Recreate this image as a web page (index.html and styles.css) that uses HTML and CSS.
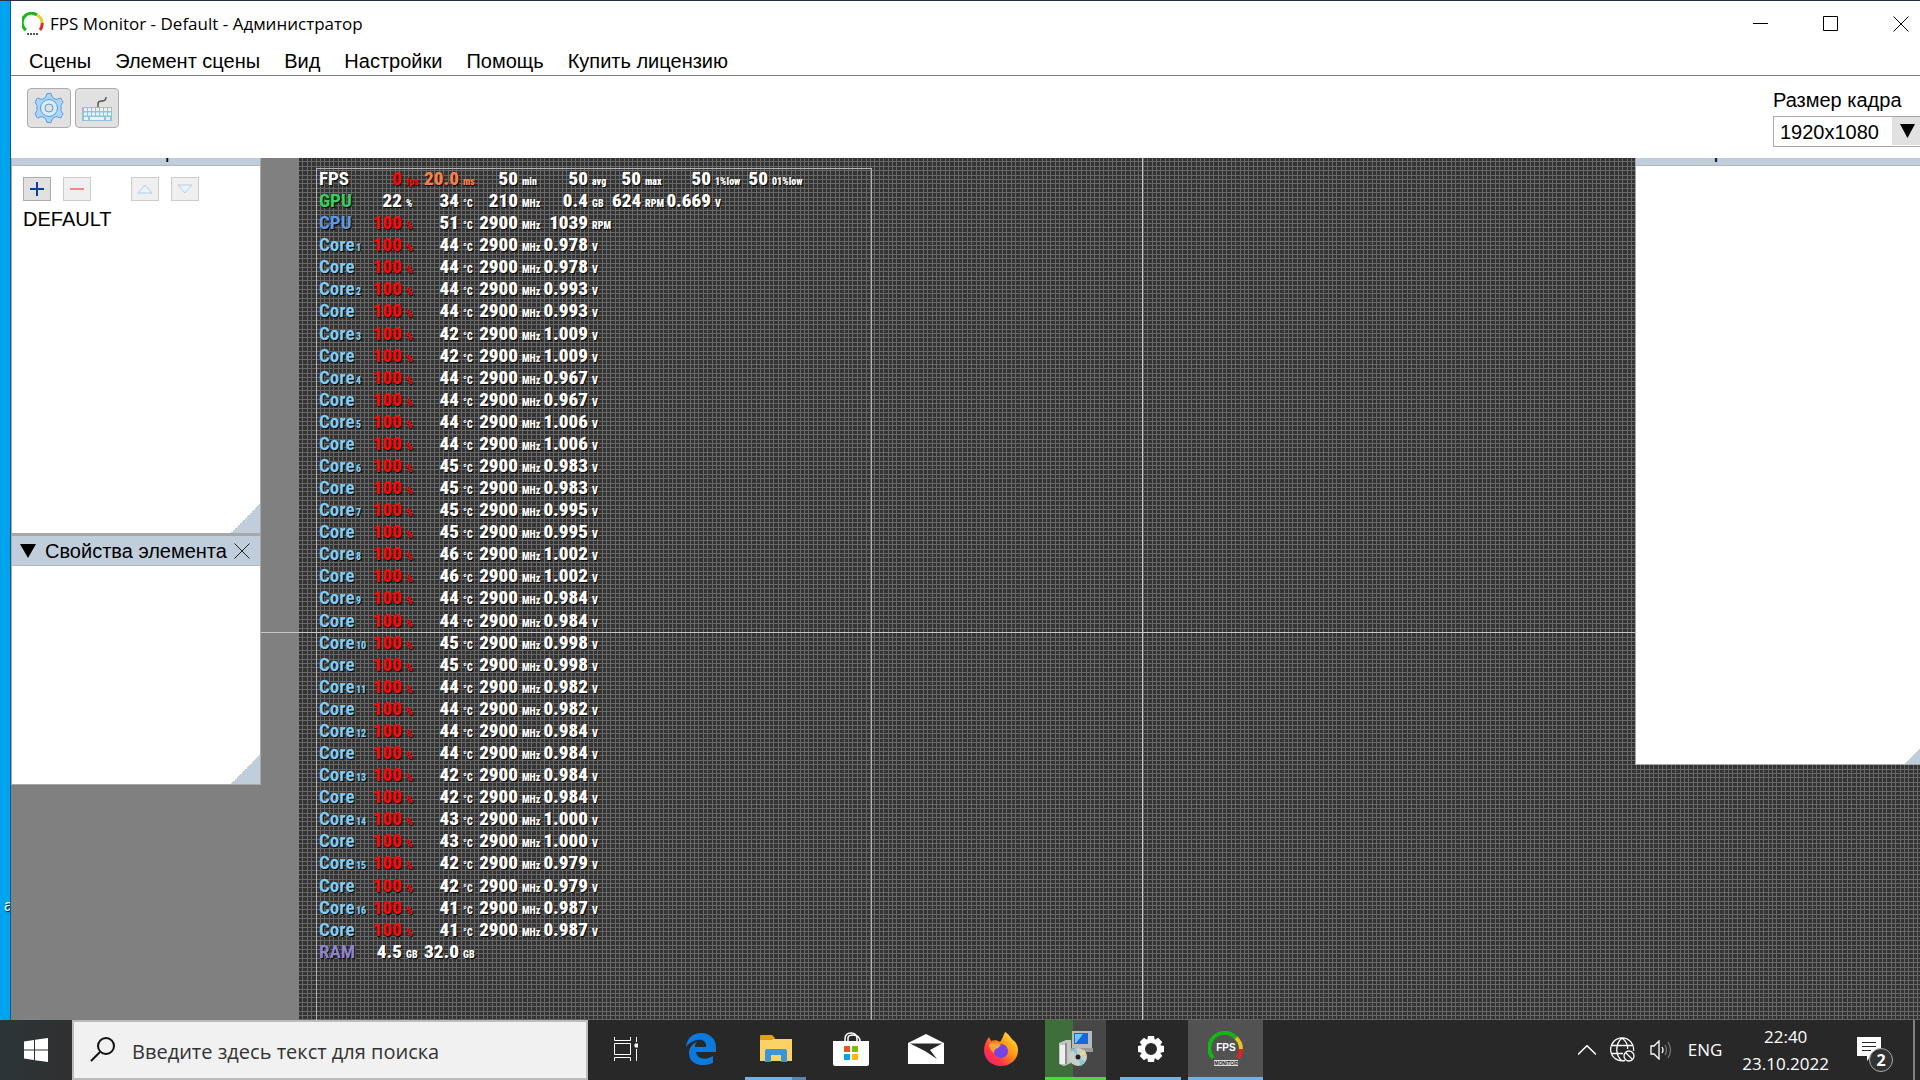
FILE: index.html
```html
<!DOCTYPE html>
<html lang="ru">
<head>
<meta charset="utf-8">
<title>FPS Monitor - Default - Администратор</title>
<link rel="stylesheet" href="styles.css">
</head>
<body>
<div class="desktop">
  <div class="wallpaper"><span class="wallpaper-label">a</span></div>
  <main class="window">
    <header class="titlebar">
      <svg class="app-icon" width="22" height="24" viewBox="0 0 22 24" fill="none" stroke-width="3">
        <path d="M4 18A9 9 0 0 1 15 3" stroke="#18b818"/>
        <path d="M15 3A9 9 0 0 1 20 11" stroke="#e8d020"/>
        <path d="M20 11A9 9 0 0 1 18 18" stroke="#e02828"/>
        <path d="M5 22H17" stroke="#555" stroke-width="2" stroke-dasharray="2 1"/>
      </svg>
      <h1 class="title">FPS Monitor - Default - Администратор</h1>
      <div class="window-buttons">
        <button class="plain" aria-label="Свернуть"><svg width="16" height="16"><path d="M0 7.500H15" stroke="#000"/></svg></button>
        <button class="plain" aria-label="Развернуть"><svg width="16" height="16"><path d="M.5 .5H14.500V14.500H.5Z" fill="none" stroke="#000"/></svg></button>
        <button class="plain" aria-label="Закрыть"><svg width="16" height="16"><path d="M.5 .5L15.500 15.500M15.500 .5L.5 15.500" stroke="#000"/></svg></button>
      </div>
    </header>
    <nav class="menu">
      <a href="#">Сцены</a><a href="#">Элемент сцены</a><a href="#">Вид</a><a href="#">Настройки</a><a href="#">Помощь</a><a href="#">Купить лицензию</a>
    </nav>
    <section class="toolbar">
      <div class="tools">
        <button class="tool" aria-label="Настройки">
          <svg width="32" height="32" viewBox="0 0 32 32" stroke="#5b9bd5" stroke-width="1">
            <path d="M14 1.500H18L19.500 5.500L23 7.500L27.500 6L30 10L28 13.500V18.500L30 22L27.500 26L23 24.500L19.500 26.500L18 30.500H14L12.500 26.500L9 24.500L4.500 26L2 22L4 18.500V13.500L2 10L4.500 6L9 7.500L12.500 5.500Z" fill="#abd6fa"/>
            <circle cx="16" cy="16" r="8.500" fill="#d6ebfc"/><circle cx="16" cy="16" r="4" fill="#e1e1e1"/>
          </svg>
        </button>
        <button class="tool" aria-label="Горячие клавиши">
          <svg width="32" height="32" viewBox="0 0 32 32">
            <path d="M17 15V12Q17 9 21 9Q25 9 25 5" fill="none" stroke="#555" stroke-width="1.500"/>
            <path d="M1 15H31V29H1Z" fill="#8fc3e0"/>
            <path d="M3 17.500H30M3 22H30" stroke="#e4f5ff" stroke-width="3" stroke-dasharray="3 1"/>
            <path d="M3 26.500H7M9 26.500H23M25 26.500H29" stroke="#e4f5ff" stroke-width="3"/>
          </svg>
        </button>
      </div>
      <div class="frame-size">
        <label for="size">Размер кадра</label>
        <div class="select-box">
          <select id="size"><option>1920x1080</option></select>
          <svg class="select-arrow" width="30" height="28"><path d="M8 7H23L15.500 21Z"/></svg>
        </div>
      </div>
    </section>
    <section class="workspace">
      <aside class="dock dock-left">
        <section class="panel panel-scenes">
          <h2 class="panel-head panel-head-cut"><svg width="16" height="14"><path d="M0 0H16L8 14Z"/></svg><span>Элементы игр</span></h2>
          <div class="panel-body">
            <div class="list-tools">
              <button class="mini" aria-label="Добавить"><svg width="16" height="16"><path d="M1 8H15M8 1V15" stroke="#0a3fa0" stroke-width="2"/></svg></button>
              <button class="mini mini-off" aria-label="Удалить"><svg width="16" height="16"><path d="M1 8H15" stroke="#ee8a8a" stroke-width="2"/></svg></button>
              <button class="mini mini-off mini-gap" aria-label="Вверх"><svg width="16" height="16"><path d="M1 12L8 4L15 12Z" fill="#e8f3fb" stroke="#b8ccdc"/></svg></button>
              <button class="mini mini-off" aria-label="Вниз"><svg width="16" height="16"><path d="M1 4L8 12L15 4Z" fill="#e8f3fb" stroke="#b8ccdc"/></svg></button>
            </div>
            <div class="scene-name">DEFAULT</div>
          </div>
        </section>
        <section class="panel panel-props">
          <h2 class="panel-head"><svg width="16" height="14"><path d="M0 0H16L8 14Z"/></svg><span>Свойства элемента</span><button class="plain" aria-label="Закрыть панель"><svg width="16" height="16"><path d="M.5 .5L15.500 15.500M15.500 .5L.5 15.500" stroke="#222"/></svg></button></h2>
          <div class="panel-body"></div>
        </section>
      </aside>
      <div class="canvas">
        <div class="overlay">
          <table class="stats"><colgroup>
            <col class="c-name"><col class="c-num"><col class="c-v1"><col class="c-u1"><col class="c-v2"><col class="c-u2"><col class="c-v3"><col class="c-u3"><col class="c-v4"><col class="c-u4"><col class="c-v5"><col class="c-u5"><col class="c-v6"><col class="c-u6"><col class="c-v7"><col class="c-u7">
          </colgroup><tbody id="stats"></tbody></table>
        </div>
        <aside class="dock dock-right">
          <section class="panel panel-right">
            <h2 class="panel-head panel-head-cut"><svg width="16" height="14"><path d="M0 0H16L8 14Z"/></svg><span>Настройки элемента</span></h2>
            <div class="panel-body"></div>
          </section>
        </aside>
      </div>
    </section>
  </main>
</div>
<footer class="taskbar">
  <button class="plain start" aria-label="Пуск"><svg width="24" height="24" fill="#fff"><path d="M0 3.500L10 2V11.500H0ZM11 1.800L24 0V11.500H11ZM0 12.500H10V22L0 20.500ZM11 12.500H24V24L11 22.200Z"/></svg></button>
  <div class="search">
    <svg width="26" height="26" fill="none" stroke="#111" stroke-width="2"><circle cx="16" cy="9" r="8"/><path d="M10 15L1 24"/></svg>
    <input type="text" aria-label="Поиск" placeholder="Введите здесь текст для поиска">
  </div>
  <div class="tasks">
    <button class="plain task" aria-label="Представление задач"><svg width="24" height="24" fill="none" stroke="#fff"><path d="M.5 0V3.500H16.500V0M.5 6.500H16.500V17.500H.5ZM.5 24V20.500H16.500V24M22.500 0V5M22.500 12V24"/><path d="M21 7H24V10H21Z" fill="#fff"/></svg></button>
    <button class="plain task" aria-label="Edge"><svg width="32" height="32" viewBox="0 0 32 32"><path d="M1 14C2 5 8 0 16 0C26 0 31 7 31 15V19H11C12 27 22 27 28 23V30C16 35 4 31 4 20C4 15 7 11 12 9C10 11 10 12 10 14H21C22 8 17 6 12 7C7 8 3 11 1 14Z" fill="#0a7bdc"/></svg></button>
    <button class="plain task task-stack" aria-label="Проводник"><svg width="32" height="28" viewBox="0 0 32 28"><path d="M0 1H12L15 4H32V26H0Z" fill="#fbd266"/><path d="M0 1Q0 0 1 0H12L15 3L12 5H0Z" fill="#dca21a"/><path d="M5 27V16Q5 14 7 14H25Q27 14 27 16V27H21V20H11V27Z" fill="#3d95d6"/></svg></button>
    <button class="plain task" aria-label="Магазин"><svg width="36" height="34" viewBox="0 0 36 34"><path d="M12 10V7Q12 1 18 1Q24 1 24 7V10M15 10V6Q15 3 20 3Q27 3 27 10" fill="none" stroke="#fff" stroke-width="1.500"/><path d="M0 9H36V32Q36 34 34 34H2Q0 34 0 32Z" fill="#fff"/><path d="M11 14H17V20H11Z" fill="#f25022"/><path d="M19 14H25V20H19Z" fill="#7fba00"/><path d="M11 22H17V28H11Z" fill="#00a4ef"/><path d="M19 22H25V28H19Z" fill="#ffb900"/></svg></button>
    <button class="plain task" aria-label="Почта"><svg width="36" height="30" viewBox="0 0 36 30"><path d="M0 9L18 0L36 9V30H0Z" fill="#fff"/><path d="M2 9.500H34L22 16L29 25L17 17Z" fill="#282828"/></svg></button>
    <button class="plain task" aria-label="Firefox"><svg width="34" height="34" viewBox="0 0 34 34"><defs><linearGradient id="fx" x1="1" y1="0" x2="0" y2="1"><stop offset="0" stop-color="#fff44f"/><stop offset=".4" stop-color="#ff980e"/><stop offset=".7" stop-color="#ff3647"/><stop offset="1" stop-color="#e31587"/></linearGradient></defs><path d="M21 0C25 2 26 5 29 8C32 10 34 14 34 18C34 28 26 34 17 34C7 34 0 27 0 18C0 13 2 9 5 5L7 9C10 8 13 8 16 10C18 8 19 4 21 0Z" fill="url(#fx)"/><circle cx="17" cy="19" r="7" fill="#7542e5"/><path d="M5 12C9 10 14 11 17 13L14 16C11 17 10 18 10 21C6 18 5 15 5 12Z" fill="#ffa436"/></svg></button>
    <button class="plain task task-install" aria-label="Установщик"><svg width="34" height="36" viewBox="0 0 34 36"><path d="M0 12L7 9H12V32L5 35L0 33Z" fill="#c4c4c4"/><path d="M1 14H6V33H1Z" fill="#eee"/><path d="M7 12V33" stroke="#555"/><path d="M13 0H33V17H13Z" fill="#b9b9b9"/><path d="M15 2H29V13H15Z" fill="#1668d8"/><path d="M16 3H24L17 12H16Z" fill="#6cc8ff"/><path d="M12 17H34V21H12Z" fill="#999"/><circle cx="19" cy="26" r="9" fill="#c9cfca"/><path d="M19 26L13 19L17 17ZM19 26L26 31L22 35Z" fill="#80c8d8"/><path d="M19 26L27 22L25 19Z" fill="#f0dc80"/><circle cx="19" cy="26" r="2.500" fill="#222"/></svg></button>
    <button class="plain task task-open" aria-label="Параметры"><svg width="30" height="30" viewBox="-15 -15 30 30"><g fill="#fff"><path id="t" d="M-4 -8L-3 -13H3L4 -8ZM-4 8L-3 13H3L4 8Z"/><use href="#t" transform="rotate(45)"/><use href="#t" transform="rotate(90)"/><use href="#t" transform="rotate(135)"/></g><circle r="8" fill="none" stroke="#fff" stroke-width="4"/></svg></button>
    <button class="plain task task-active" aria-label="FPS Monitor"><svg width="36" height="36" viewBox="0 0 36 36" fill="none" stroke-width="4"><path d="M5 27A14.500 14.500 0 0 1 28 7" stroke="#12b712"/><path d="M28 7A14.500 14.500 0 0 1 33 18" stroke="#e8c41c"/><path d="M33 18A14.500 14.500 0 0 1 30 27" stroke="#e42222"/><path d="M6 29H30V35H6Z" fill="#ddd"/><text x="18" y="20" class="icon-fps">FPS</text><text x="18" y="34" class="icon-mon">MONITOR</text></svg></button>
  </div>
  <div class="tray">
    <button class="plain" aria-label="Скрытые значки"><svg width="18" height="10"><path d="M0 9.500L9 .7L18 9.500" fill="none" stroke="#fff" stroke-width="1.500"/></svg></button>
    <svg width="26" height="26" viewBox="0 0 26 26" fill="none" stroke="#fff" stroke-width="1.300"><path d="M15 23.500A11.500 11.500 0 1 1 23.500 14M1 8.500H23M1 16.500H13M12 1C5 7 5 18 12 24M12 1C17 5 18 9 17.500 12"/><circle cx="19" cy="19" r="5"/><path d="M15.500 15.500L22.500 22.500"/></svg>
    <svg width="24" height="20" viewBox="0 0 24 20" fill="none" stroke="#fff" stroke-width="1.300"><path d="M1 6H4L9 1V19L4 14H1ZM12 7Q14 10 12 13"/><path d="M15 5Q18 10 15 15M18 2Q23 10 18 18" stroke="#777"/></svg>
    <span>ENG</span>
    <time class="clock"><span>22:40</span><span>23.10.2022</span></time>
    <button class="plain notify" aria-label="Уведомления"><svg width="24" height="26"><path d="M0 0H24V19H14L10 24V19H0Z" fill="#fff"/><path d="M5 5.500H19M5 9.500H19M5 13.500H14" stroke="#282828"/></svg><span class="badge">2</span></button>
  </div>
</footer>
<script src="script.js"></script>
</body>
</html>
```
FILE: styles.css
```css
* { box-sizing: border-box; }
body {
  margin: 0;
  height: 100vh;
  display: flex;
  flex-direction: column;
  overflow: hidden;
  font-family: "Liberation Sans", Arial, sans-serif;
  font-size: 20px;
  line-height: 24px;
  color: #000;
  background: #282828;
}
h1, h2 { margin: 0; font-weight: normal; }
button { font: inherit; color: inherit; }
svg { display: block; flex: none; }
.plain { border: 0; padding: 0; background: none; }

.desktop { flex: 1; min-height: 0; display: flex; border-top: 1px solid #26304a; }
.wallpaper {
  width: 11px;
  padding-top: 893px;
  overflow: hidden;
  background: #00a3ee;
  border-right: 1px solid #175a80;
}
.wallpaper-label { display: block; padding-left: 4px; font-size: 16px; color: #fff; text-shadow: 1px 1px 1px #000; }
.window { flex: 1; min-width: 0; display: flex; flex-direction: column; background: #fff; }

.titlebar { display: flex; align-items: center; gap: 6px; height: 46px; padding: 0 11px; }
.title { flex: 1; font-family: "Open Sans", "Noto Sans", sans-serif; font-size: 17px; }
.window-buttons { display: flex; gap: 54px; }
.menu { display: flex; gap: 24px; height: 29px; padding: 2px 0 0 18px; border-bottom: 1px solid #808080; }
.menu a { color: inherit; text-decoration: none; }
.toolbar { display: flex; justify-content: space-between; height: 82px; padding: 12px 0 0 16px; }
.tools { display: flex; gap: 4px; }
.tool { width: 44px; height: 40px; padding: 3px 5px; border: 1px solid #adadad; border-radius: 4px; background: #e1e1e1; }
.frame-size { width: 147px; }
.frame-size label { display: block; height: 28px; }
.select-box { position: relative; }
select {
  appearance: none;
  display: block;
  width: 100%;
  height: 31px;
  padding: 1px 0 0 6px;
  border: 1px solid #a8a8a8;
  border-right: 0;
  border-radius: 0;
  background: #fff;
  color: #000;
  font: inherit;
}
.select-arrow { position: absolute; right: 0; top: 1px; background: #e1e1e1; width: 28px; pointer-events: none; }

.workspace { flex: 1; min-height: 0; display: flex; background: #808080; }
.dock-left { width: 250px; margin-right: 38px; }
.panel { overflow: hidden; display: flex; flex-direction: column; border: 1px solid #a8a8a8; border-top: 0; background: #fff; }
.panel-head { display: flex; align-items: center; gap: 9px; height: 32px; flex: none; padding-left: 8px; border-top: 2px solid #a8a8a8; border-bottom: 1px solid #b4b8bc; background: #c0cddb; font-size: 20px; white-space: nowrap; }
.panel-head .plain { margin-left: -2px; }
.panel-head-cut { margin-top: -24px; }
.panel-body {
  flex: 1;
  padding: 11px;
  background: linear-gradient(135deg, transparent 50%, #c0cddb 50%) right bottom / 29px 29px no-repeat;
}
.panel-scenes { height: 376px; }
.panel-props { height: 251px; }
.panel-right { height: 607px; border-right: 0; }
.panel-right .panel-body { background-position: right -14px bottom; }
.list-tools { display: flex; gap: 12px; }
.mini { display: grid; place-items: center; width: 28px; height: 24px; padding: 0; border: 1px solid #adadad; background: #e1e1e1; }
.mini-off { border-color: #ccc; background: #efefef; }
.mini-gap { margin-left: 28px; }
.scene-name { padding-top: 6px; }

/* The 22px tile holds five grid steps */
.canvas {
  flex: 1;
  position: relative;
  display: flex;
  justify-content: space-between;
  padding: 10px 0 0 17px;
  background:
    repeating-linear-gradient(to right, transparent 0 3px, #686868 3px 4px, transparent 4px 8px, #686868 8px 9px, transparent 9px 12px, #686868 12px 13px, transparent 13px 17px, #686868 17px 18px, transparent 18px 21px, #686868 21px 22px),
    repeating-linear-gradient(to bottom, transparent 0 3px, #686868 3px 4px, transparent 4px 8px, #686868 8px 9px, transparent 9px 12px, #686868 12px 13px, transparent 13px 17px, #686868 17px 18px, transparent 18px 21px, #686868 21px 22px),
    #333;
}
.canvas::before { content: ""; position: absolute; left: 52%; top: 0; bottom: 0; width: 1px; background: #c8c8c8; }
.canvas::after { content: ""; position: absolute; left: -38px; right: 285px; top: 55%; height: 1px; background: #c8c8c8; }
.overlay { width: 556px; padding: 0 0 0 2px; border: 1px solid #b4b4b4; border-bottom: 0; overflow: hidden; }
.dock-right { width: 285px; margin-top: -10px; position: relative; z-index: 1; }

.stats {
  table-layout: fixed;
  width: 486px;
  height: 795px;
  border-collapse: collapse;
  font-family: "Roboto Condensed", "Liberation Sans Narrow", "Arial Narrow", sans-serif;
  font-weight: 900;
  font-size: 19px;
  line-height: 20px;
  color: #fff;
  text-shadow: 1px 1px 1px #000;
}
.stats td, .stats th { padding: 0; white-space: nowrap; text-align: right; vertical-align: baseline; }
.stats th { text-align: left; }
.stats .unit, .stats .index { font-size: 10px; line-height: 10px; text-align: left; }
.stats .unit { padding-left: 4px; }
.stats .index { padding-left: 1px; }
.c-name { width: 36px; } .c-num { width: 17px; }
.c-v1 { width: 30px; } .c-u1 { width: 20px; }
.c-v2 { width: 37px; } .c-u2 { width: 20px; }
.c-v3 { width: 39px; } .c-u3 { width: 24px; }
.c-v4 { width: 46px; } .c-u4 { width: 24px; }
.c-v5 { width: 29px; } .c-u5 { width: 24px; }
.c-v6 { width: 46px; } .c-u6 { width: 29px; }
.c-v7 { width: 28px; } .c-u7 { width: 37px; }
.stats .red { color: #f01010; }
.stats .orange { color: #f48050; }
.stats .green { color: #38d060; }
.stats .blue { color: #5a9ce8; }
.stats .sky { color: #80ccf4; }
.stats .violet { color: #8c84cc; }

.taskbar {
  display: flex;
  align-items: stretch;
  height: 60px;
  flex: none;
  color: #fff;
  background: #282828;
  font-family: "Open Sans", "Noto Sans", sans-serif;
  font-size: 17px;
}
.start { width: 72px; display: grid; place-items: center; background: linear-gradient(90deg, #2b3538, #303030); }
.search { width: 516px; display: flex; align-items: center; gap: 16px; padding-left: 16px; border: 2px solid #bcbcbc; background: #f1f1f1; }
.search input { flex: 1; min-width: 0; border: 0; padding: 4px 0 0; background: none; font: inherit; font-size: 20px; }
.search input::placeholder { color: #333; opacity: 1; }
.tasks { display: flex; }
.task { position: relative; width: 75px; display: grid; place-items: center; border-bottom: 3px solid transparent; }
.task-stack { background: linear-gradient(90deg, #76b0e0 47px, #5c87ac 47px) center bottom / 61px 3px no-repeat border-box; }
.task-open { background: linear-gradient(#76b0e0, #76b0e0) center bottom / 61px 3px no-repeat border-box; }
.task-install { width: 61px; margin: 0 7px; border-color: #4fd83c; background: linear-gradient(90deg, #3e6f3a 28px, #474747 28px); }
.task-active { border-color: #76b0e0; background: #525252; }
.icon-fps { font: bold 10px "Liberation Sans", sans-serif; text-anchor: middle; fill: #fff; stroke: none; }
.icon-mon { font: bold 5px "Liberation Sans", sans-serif; text-anchor: middle; fill: #222; stroke: none; }
.tray { display: flex; align-items: center; margin-left: auto; padding-right: 28px; gap: 14px; border-right: 2px solid #808080; margin-right: 5px; }
.clock { display: flex; flex-direction: column; margin-left: 6px; text-align: center; line-height: 27px; }
.notify { position: relative; margin: 0 4px 0 14px; }
.badge {
  position: absolute;
  left: 12px;
  top: 11px;
  width: 24px;
  height: 24px;
  border: 1px solid #aaa;
  border-radius: 50%;
  background: #333;
  font-weight: bold;
  font-size: 16px;
  line-height: 22px;
}
```
FILE: script.js
```js
// Each reading is [value, unit, colour].
const rows = [
  ["FPS", "", "", [["0", "fps", "red"], ["20.0", "ms", "orange"], ["50", "min"], ["50", "avg"], ["50", "max"], ["50", "1%low"], ["50", "01%low"]]],
  ["GPU", "", "green", [["22", "%"], ["34", "°C"], ["210", "MHz"], ["0.4", "GB"], ["624", "RPM"], ["0.669", "V"]]],
  ["CPU", "", "blue", [["100", "%", "red"], ["51", "°C"], ["2900", "MHz"], ["1039", "RPM"]]]
];
const cores = [
  [44, "0.978"], [44, "0.993"], [42, "1.009"], [44, "0.967"], [44, "1.006"], [45, "0.983"], [45, "0.995"], [46, "1.002"],
  [44, "0.984"], [45, "0.998"], [44, "0.982"], [44, "0.984"], [42, "0.984"], [43, "1.000"], [42, "0.979"], [41, "0.987"]
];
cores.forEach(([temp, volt], i) => {
  for (const index of [i + 1, ""]) {
    rows.push(["Core", index, "sky", [["100", "%", "red"], [temp, "°C"], ["2900", "MHz"], [volt, "V"]]]);
  }
});
rows.push(["RAM", "", "violet", [["4.5", "GB"], ["32.0", "GB"]]]);

document.getElementById("stats").innerHTML = rows.map(([name, index, colour, cells]) =>
  `<tr><th scope="row" class="${colour}">${name}</th><td class="index ${colour}">${index}</td>` +
  cells.map(([value, unit, c = ""]) => `<td class="${c}">${value}</td><td class="unit ${c}">${unit}</td>`).join("") +
  "</tr>").join("");
```
